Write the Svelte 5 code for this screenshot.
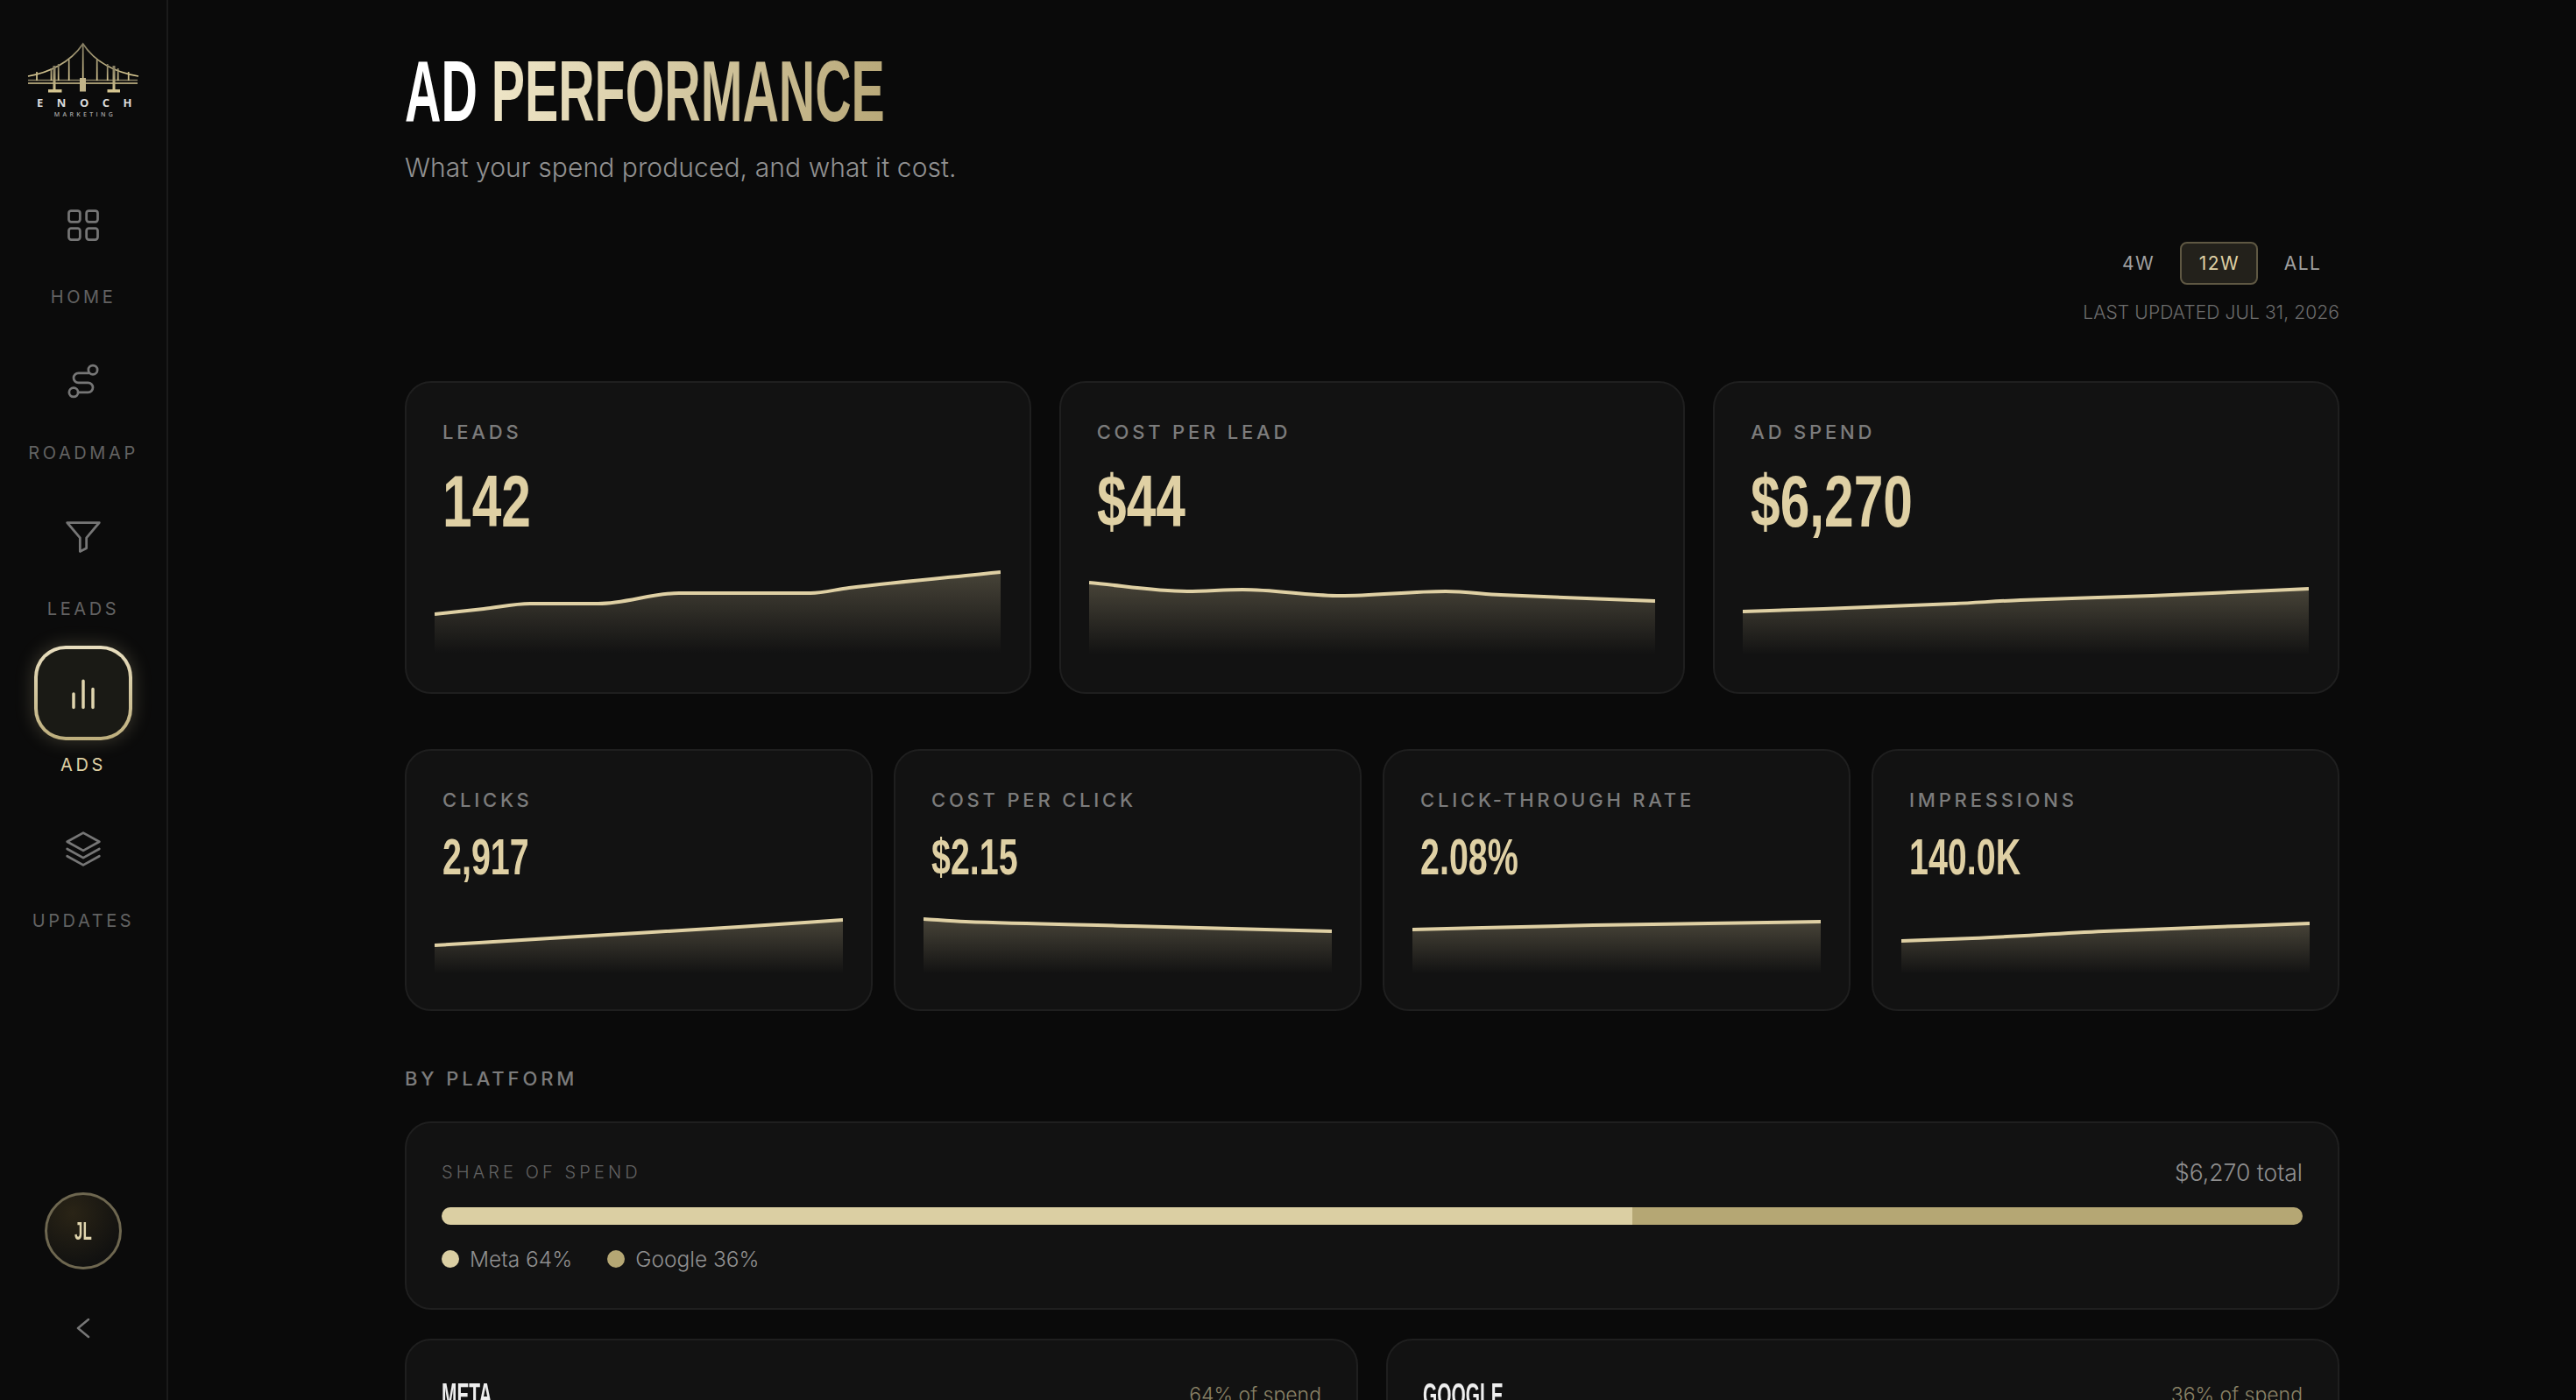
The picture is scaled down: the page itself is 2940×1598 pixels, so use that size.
<script>
  const nav = [
    { label: "HOME", icon: "home" },
    { label: "ROADMAP", icon: "route" },
    { label: "LEADS", icon: "funnel" },
    { label: "ADS", icon: "bars", active: true },
    { label: "UPDATES", icon: "layers" }
  ];

  const bigCards = [
    { label: "LEADS", value: "142", pts: [[0,65],[56,59],[109,53],[187,53],[279,41],[429,41],[473,35],[646,17]] },
    { label: "COST PER LEAD", value: "$44", pts: [[0,29],[112,39],[175,37],[286,44],[407,39],[470,43],[646,50]] },
    { label: "AD SPEND", value: "$6,270", pts: [[0,62],[92,59],[242,53],[317,49],[467,44],[646,36]] }
  ];

  const smallCards = [
    { label: "CLICKS", value: "2,917", pts: [[0,41],[164,31],[347,20],[466,12]] },
    { label: "COST PER CLICK", value: "$2.15", pts: [[0,11],[48,14],[238,19],[466,25]] },
    { label: "CLICK-THROUGH RATE", value: "2.08%", pts: [[0,23],[206,18],[338,16],[466,14]] },
    { label: "IMPRESSIONS", value: "140.0K", pts: [[0,36],[81,33],[231,25],[466,16]] }
  ];

  // monotone curve through the points so flat runs stay flat
  function linePath(pts) {
    const slopes = [];
    for (let i = 0; i < pts.length - 1; i++) {
      slopes.push((pts[i + 1][1] - pts[i][1]) / (pts[i + 1][0] - pts[i][0]));
    }
    const tan = pts.map((_, i) => {
      if (i === 0) return slopes[0];
      if (i === pts.length - 1) return slopes[i - 1];
      const a = slopes[i - 1];
      const b = slopes[i];
      return a * b <= 0 ? 0 : (2 * a * b) / (a + b);
    });
    let d = `M${pts[0][0]} ${pts[0][1]}`;
    for (let i = 0; i < pts.length - 1; i++) {
      const dx = (pts[i + 1][0] - pts[i][0]) / 3;
      d += ` C${pts[i][0] + dx} ${pts[i][1] + tan[i] * dx} ${pts[i + 1][0] - dx} ${pts[i + 1][1] - tan[i + 1] * dx} ${pts[i + 1][0]} ${pts[i + 1][1]}`;
    }
    return d;
  }

  function areaPath(pts, h) {
    const last = pts[pts.length - 1][0];
    return `${linePath(pts)} L${last} ${h} L0 ${h} Z`;
  }
</script>

{#snippet spark(card, w, h, id)}
  <svg class="spark" width={w} height={h} viewBox="0 0 {w} {h}" aria-hidden="true">
    <defs>
      <linearGradient id={id} x1="0" y1="0" x2="0" y2="1">
        <stop offset="0" stop-color="#dfd0a4" stop-opacity="0.26" />
        <stop offset="0.9" stop-color="#dfd0a4" stop-opacity="0" />
      </linearGradient>
    </defs>
    <path d={areaPath(card.pts, h)} fill="url(#{id})" />
    <path d={linePath(card.pts)} fill="none" stroke="#dfd0a4" stroke-width="4" />
  </svg>
{/snippet}

<div class="shell">
  <aside class="sidebar">
    <svg class="logo" width="128" height="88" viewBox="32 46 128 88">
      <defs>
        <linearGradient id="gold" x1="0" y1="1" x2="0" y2="0">
          <stop offset="0" stop-color="#d8c892" />
          <stop offset="1" stop-color="#857d62" />
        </linearGradient>
      </defs>
      <g stroke="url(#gold)" fill="none" stroke-width="1.700">
        <path d="M32 87 C55 83 80 72 94.7 50 C109 72 134 83 158 87" />
        <path d="M32 91.5 H157 M32 95 H157" />
        <path d="M94.7 50 V90 M42 82 V92 M78.7 68 V92 M110.7 68 V92 M146.7 82 V92" />
        <path d="M58.5 78 V92 M66.7 73 V92 M122.7 73 V92 M134.7 78 V92" />
      </g>
      <path d="M60.5 75 h3 V102 h7 v3.5 H55 V102 h5.5 Z M128.5 75 h3 V102 h5.5 v3.5 H122.5 V102 h6 Z" fill="url(#gold)" />
      <rect x="91" y="89" width="7" height="15.5" fill="#c2b489" />
      <text class="logo-name" x="104" y="122" text-anchor="middle">ENOCH</text>
      <text class="logo-sub" x="97" y="132.500" text-anchor="middle">MARKETING</text>
    </svg>

    <nav class="nav">
      {#each nav as item}
        <div class="nav-item" class:active={item.active}>
          <div class="nav-icon">
            <svg width="44" height="44" viewBox="0 0 24 24" fill="none" stroke="currentColor" stroke-width="1.5" stroke-linecap="round" stroke-linejoin="round">
              {#if item.icon === "home"}
                <rect x="3" y="3" width="7" height="7" rx="1.5" />
                <rect x="14" y="3" width="7" height="7" rx="1.5" />
                <rect x="3" y="14" width="7" height="7" rx="1.5" />
                <rect x="14" y="14" width="7" height="7" rx="1.5" />
              {:else if item.icon === "route"}
                <circle cx="6" cy="19" r="2.800" />
                <path d="M8.800 19H15a3 3 0 0 0 0-6H9a3 3 0 0 1 0-6h6.500" />
                <circle cx="18" cy="5" r="2.800" />
              {:else if item.icon === "funnel"}
                <polygon points="2 3 22 3 14 12.460 14 19 10 21 10 12.460" />
              {:else if item.icon === "bars"}
                <path d="M6 21 V12.500 M12 21 V4.500 M18 21 V9.500" stroke-width="1.900" />
              {:else}
                <polygon points="12 2 22 7.500 12 13 2 7.500" />
                <polyline points="2 12 12 17.500 22 12" />
                <polyline points="2 16.500 12 22 22 16.500" />
              {/if}
            </svg>
          </div>
          <span class="nav-label">{item.label}</span>
        </div>
      {/each}
    </nav>

    <div class="side-foot">
      <div class="avatar"><span class="cond avatar-text">JL</span></div>
      <svg class="collapse" width="16" height="24" viewBox="0 0 16 24" fill="none" stroke="#777" stroke-width="2.500" stroke-linecap="round" stroke-linejoin="round">
        <polyline points="14 2 2 12 14 22" />
      </svg>
    </div>
  </aside>

  <main class="main">
    <div class="content">
      <header class="head">
        <h1 class="title cond">AD <span class="gold">PERFORMANCE</span></h1>
        <p class="sub">What your spend produced, and what it cost.</p>
      </header>

      <div class="controls">
        <div class="range">
          <button class="range-btn">4W</button>
          <button class="range-btn on">12W</button>
          <button class="range-btn">ALL</button>
        </div>
        <div class="updated">LAST UPDATED JUL 31, 2026</div>
      </div>

      <section class="row big">
        {#each bigCards as card, i}
          <div class="card stat">
            <div class="stat-label">{card.label}</div>
            <div class="stat-value big-value"><span class="cond">{card.value}</span></div>
            {@render spark(card, 646, 120, `big${i}`)}
          </div>
        {/each}
      </section>

      <section class="row small">
        {#each smallCards as card, i}
          <div class="card stat">
            <div class="stat-label">{card.label}</div>
            <div class="stat-value small-value"><span class="cond">{card.value}</span></div>
            {@render spark(card, 466, 80, `small${i}`)}
          </div>
        {/each}
      </section>

      <h2 class="section-title">BY PLATFORM</h2>

      <section class="card share">
        <div class="share-top">
          <span class="share-label">SHARE OF SPEND</span>
          <span class="share-total">$6,270 total</span>
        </div>
        <div class="bar">
          <div class="bar-meta" style="width: 64%"></div>
          <div class="bar-google" style="width: 36%"></div>
        </div>
        <div class="legend">
          <span class="legend-item"><i class="dot dot-meta"></i>Meta 64%</span>
          <span class="legend-item"><i class="dot dot-google"></i>Google 36%</span>
        </div>
      </section>

      <section class="row platforms">
        <div class="card platform">
          <span class="platform-name"><span class="cond">META</span></span>
          <span class="platform-share">64% of spend</span>
        </div>
        <div class="card platform">
          <span class="platform-name"><span class="cond">GOOGLE</span></span>
          <span class="platform-share">36% of spend</span>
        </div>
      </section>
    </div>
  </main>
</div>

<style>
  :global(body) {
    background: #0a0a0a;
  }

  .shell {
    display: flex;
    height: 100vh;
    overflow: hidden;
    background: #0a0a0a;
    font-family: Inter, "Open Sans", sans-serif;
  }

  .cond {
    display: inline-block;
    font-family: "Liberation Sans Narrow", "Liberation Sans", sans-serif;
    font-weight: 700;
    transform: scaleX(0.72);
    transform-origin: left center;
    white-space: nowrap;
  }

  /* sidebar */
  .sidebar {
    flex: 0 0 192px;
    box-sizing: border-box;
    border-right: 2px solid #1b1b1b;
    background: #0b0b0b;
    display: flex;
    flex-direction: column;
    align-items: center;
    padding-bottom: 70px;
  }

  .logo {
    margin-top: 46px;
    margin-left: 2px;
    overflow: visible;
  }

  .logo-name {
    font-family: "Open Sans", sans-serif;
    font-size: 13px;
    font-weight: 700;
    letter-spacing: 15.500px;
    fill: #dcdcdc;
  }

  .logo-sub {
    font-family: "Open Sans", sans-serif;
    font-size: 7px;
    font-weight: 600;
    letter-spacing: 3.300px;
    fill: #a5a5a5;
  }

  .nav {
    margin-top: 69px;
    display: flex;
    flex-direction: column;
    gap: 28px;
    align-items: center;
  }

  .nav-item {
    display: flex;
    flex-direction: column;
    align-items: center;
    gap: 14px;
    color: #767676;
  }

  .nav-icon {
    width: 112px;
    height: 108px;
    box-sizing: border-box;
    display: flex;
    align-items: center;
    justify-content: center;
  }

  .nav-label {
    font-size: 20px;
    line-height: 28px;
    letter-spacing: 3.600px;
    color: #626262;
  }

  .active .nav-icon {
    position: relative;
    border: 4px solid transparent;
    border-radius: 36px;
    background:
      linear-gradient(#1a1a15, #1a1a15) padding-box,
      linear-gradient(180deg, #e9dfc0, #bdae7c) border-box;
    box-shadow: 0 0 22px rgba(223, 208, 164, 0.24);
    color: #e0d5ae;
  }

  .active .nav-label {
    color: #dfd0a4;
  }

  .side-foot {
    margin-top: auto;
    display: flex;
    flex-direction: column;
    align-items: center;
    gap: 55px;
  }

  .avatar {
    width: 88px;
    height: 88px;
    box-sizing: border-box;
    border: 3px solid #6e6750;
    border-radius: 50%;
    background: radial-gradient(circle at 35% 25%, #2a2416, #111110 75%);
    display: flex;
    align-items: center;
    justify-content: center;
  }

  .avatar-text {
    font-size: 29px;
    line-height: 1;
    color: #e0d5ae;
    transform: scaleX(0.58);
    transform-origin: center;
  }

  /* main column */
  .main {
    flex: 1;
    min-width: 0;
    overflow-y: auto;
    scrollbar-width: none;
  }

  .content {
    width: 2208px;
    margin: 0 auto;
    padding-top: 48px;
    padding-bottom: 96px;
  }

  .title {
    margin: 0;
    font-size: 98px;
    line-height: 112px;
    color: #fff;
    transform: scaleX(0.585);
  }

  .gold {
    background: linear-gradient(100deg, #efe6c8, #b8a878);
    -webkit-background-clip: text;
    background-clip: text;
    color: transparent;
  }

  .sub {
    margin: 11px 0 0;
    font-size: 30px;
    line-height: 40px;
    font-weight: 300;
    letter-spacing: 0.090px;
    color: #919191;
  }

  .controls {
    display: flex;
    flex-direction: column;
    align-items: flex-end;
    gap: 19px;
    margin-top: 65px;
  }

  .range {
    display: flex;
    gap: 8px;
  }

  .range-btn {
    height: 49px;
    padding: 0 18.5px 0 20px;
    border: 2px solid transparent;
    border-radius: 8px;
    background: none;
    font: inherit;
    font-size: 21px;
    letter-spacing: 1.500px;
    color: #a0a0a0;
  }

  .range-btn.on {
    background: #23211b;
    border-color: #5f5843;
    color: #dfd0a4;
  }

  .updated {
    font-size: 21px;
    line-height: 26px;
    font-weight: 300;
    letter-spacing: 0.100px;
    color: #6c6c6c;
  }

  .row {
    display: grid;
  }

  .big {
    grid-template-columns: repeat(3, 1fr);
    gap: 32px;
    margin-top: 65px;
  }

  .small {
    grid-template-columns: repeat(4, 1fr);
    gap: 24px;
    margin-top: 63px;
  }

  .card {
    box-sizing: border-box;
    background: #121212;
    border: 2px solid #1f1f1f;
    border-radius: 30px;
  }

  .stat {
    padding: 42px 32px 34px;
  }

  .stat-label {
    margin-left: 9px;
    font-size: 22px;
    line-height: 28px;
    font-weight: 500;
    letter-spacing: 3.800px;
    color: #7c7c7c;
    white-space: nowrap;
  }

  .stat-value {
    margin-left: 9px;
    color: #dfd0a4;
  }

  .big-value {
    font-size: 84px;
    line-height: 100px;
    margin-top: 14px;
    margin-bottom: 14px;
  }

  .small-value {
    font-size: 58px;
    line-height: 70px;
    margin-top: 15px;
    margin-bottom: 25px;
  }

  .small-value .cond {
    transform: scaleX(0.68);
  }

  .spark {
    display: block;
  }

  .section-title {
    margin: 62px 0 0;
    font-size: 22px;
    line-height: 30px;
    font-weight: 500;
    letter-spacing: 3.900px;
    color: #7c7c7c;
  }

  .share {
    margin-top: 34px;
    padding: 40px;
    height: 215px;
  }

  .share-top {
    display: flex;
    justify-content: space-between;
    align-items: center;
  }

  .share-label {
    font-size: 20px;
    font-weight: 300;
    letter-spacing: 4.100px;
    color: #626262;
  }

  .share-total {
    font-size: 26.500px;
    font-weight: 300;
    color: #8f8f8f;
  }

  .bar {
    display: flex;
    height: 20px;
    margin-top: 24px;
    border-radius: 10px;
    overflow: hidden;
  }

  .bar-meta {
    background: #dbcfa3;
  }

  .bar-google {
    background: #b5a774;
  }

  .legend {
    display: flex;
    gap: 40px;
    margin-top: 24px;
  }

  .legend-item {
    display: flex;
    align-items: center;
    gap: 12px;
    font-size: 24.500px;
    font-weight: 300;
    color: #8f8f8f;
  }

  .dot {
    width: 20px;
    height: 20px;
    border-radius: 50%;
  }

  .dot-meta {
    background: #dbcfa3;
  }

  .dot-google {
    background: #b5a774;
  }

  .platforms {
    grid-template-columns: repeat(2, 1fr);
    gap: 32px;
    margin-top: 33px;
  }

  .platform {
    display: flex;
    justify-content: space-between;
    align-items: flex-start;
    padding: 40px;
    min-height: 300px;
  }

  .platform-name {
    font-size: 36px;
    line-height: 44px;
    color: #eee;
  }

  .platform-name .cond {
    transform: scaleX(0.58);
  }

  .platform-share {
    margin-top: 8px;
    font-size: 23px;
    font-weight: 300;
    color: #8a8266;
  }
</style>
